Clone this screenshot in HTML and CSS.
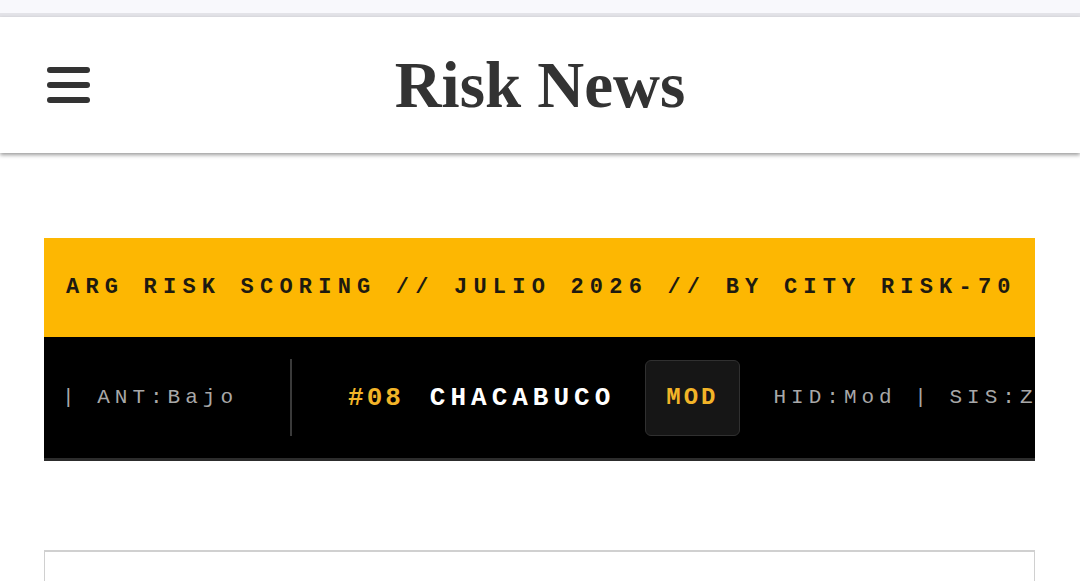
FILE: index.html
```html
<!doctype html>
<html>
<head>
<meta charset="utf-8">
<title>Risk News</title>
<link rel="stylesheet" href="styles.css">
</head>

<body>
<div class="topbar"></div>
<header class="masthead">
	<button class="menu" aria-label="Menu">
		<span></span>
		<span></span>
		<span></span>
	</button>
	<h1 class="brand">Risk News</h1>
	<div></div>
</header>

<main class="content">
	<section class="scoring">
		<div class="scoring-head">ARG RISK SCORING // JULIO 2026 // BY CITY RISK-70</div>
		<div class="ticker">
			<div class="track">
				<div class="item">
					<span class="meta">| ANT:Bajo</span>
				</div>
				<div class="item">
					<span class="rank">#08</span>
					<span class="city">CHACABUCO</span>
					<span class="level">MOD</span>
					<span class="meta">HID:Mod | SIS:Z</span>
				</div>
			</div>
		</div>
	</section>

	<article class="card"></article>
</main>
</body>
</html>
```

FILE: styles.css
```css
*{
	margin: 0;
	padding: 0;
	box-sizing: border-box;
}
body{
	background-color: #fff;
	font-family: "Liberation Serif", serif;
	color: #333;
}
.topbar{
	height: 17px;
	background-color: #f8f8fc;
	border-bottom: 4px solid #e3e3e8;
}
.masthead{
	height: 136px;
	display: grid;
	grid-template-columns: 1fr auto 1fr;
	align-items: center;
	padding: 0 47px;
	background-color: #fff;
	box-shadow: 0 2px 4px rgba(0,0,0,0.4);
	position: relative;
}
.menu{
	width: 43px;
	display: flex;
	flex-direction: column;
	gap: 9px;
	border: none;
	background: none;
	cursor: pointer;
}
.menu span{
	display: block;
	height: 6px;
	border-radius: 3px;
	background-color: #333;
}
.brand{
	font: 700 65px/1 "Liberation Serif", serif;
	color: #333;
}
.content{
	padding: 85px 45px 0 44px;
}
.scoring-head{
	height: 99px;
	display: flex;
	align-items: center;
	padding-left: 22px;
	background-color: #fdb702;
	color: #1e1a10;
	font: 700 22px "Liberation Mono", monospace;
	letter-spacing: 6.2px;
	white-space: nowrap;
	overflow: hidden;
}
/* black ticker strip, clipped at the right edge */
.ticker{
	height: 124px;
	background-color: #000;
	border-bottom: 3px solid #2c2c2c;
	overflow: hidden;
	display: flex;
	align-items: center;
}
.track{
	display: flex;
	align-items: center;
	white-space: nowrap;
	padding-left: 18px;
}
.item{
	display: flex;
	align-items: center;
	height: 77px;
	padding-right: 52px;
}
.item + .item{
	border-left: 2px solid #3a3a3a;
	padding-left: 56px;
}
.meta{
	font: 400 21px "Liberation Mono", monospace;
	letter-spacing: 5px;
	color: #a8a8a8;
}
.rank{
	font: 700 26px "Liberation Mono", monospace;
	letter-spacing: 3px;
	color: #f2b428;
	margin-right: 26px;
}
.city{
	font: 700 26px "Liberation Mono", monospace;
	letter-spacing: 5px;
	color: #fff;
	margin-right: 30px;
}
.level{
	display: flex;
	align-items: center;
	height: 76px;
	padding: 0 20px;
	margin-right: 34px;
	background-color: #161616;
	border: 1px solid #303030;
	border-radius: 6px;
	font: 700 24px "Liberation Mono", monospace;
	letter-spacing: 3px;
	color: #f2b428;
}
.card{
	display: block;
	height: 40px;
	margin-top: 89px;
	border: 1px solid #d0d0d0;
	border-top-width: 2px;
	background-color: #fff;
}
```
